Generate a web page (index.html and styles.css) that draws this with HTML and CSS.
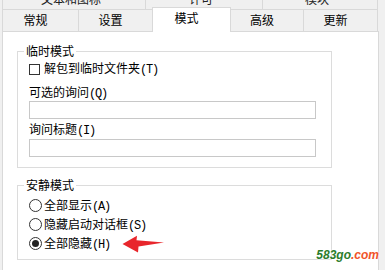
FILE: index.html
```html
<!DOCTYPE html>
<html lang="zh-CN">
<head>
  <meta charset="UTF-8">
  <title>自解压选项 - 模式</title>
  <link rel="stylesheet" href="styles.css">
</head>
<body>
  <div class="tabs tabs-back">
    <div class="tab tab-text"><span>文本和图标</span></div>
    <div class="tab tab-license"><span>许可</span></div>
    <div class="tab tab-module"><span>模块</span></div>
  </div>

  <div class="tabs tabs-front">
    <div class="tab tab-general">常规</div>
    <div class="tab tab-setup">设置</div>
    <div class="tab tab-modes active">模式</div>
    <div class="tab tab-advanced">高级</div>
    <div class="tab tab-update">更新</div>
  </div>

  <div class="panel">
    <div class="group group-temp">
      <div class="group-title">临时模式</div>
      <div class="option-row check-row">
        <span class="check"></span>
        <span class="label">解包到临时文件夹<span class="key">(T)</span></span>
      </div>
      <div class="field-label first">可选的询问<span class="key">(Q)</span></div>
      <div class="textbox"></div>
      <div class="field-label">询问标题<span class="key">(I)</span></div>
      <div class="textbox"></div>
    </div>

    <div class="group group-silent">
      <div class="group-title">安静模式</div>
      <div class="option-row radio-row first">
        <span class="radio"></span>
        <span class="label">全部显示<span class="key">(A)</span></span>
      </div>
      <div class="option-row radio-row">
        <span class="radio"></span>
        <span class="label">隐藏启动对话框<span class="key">(S)</span></span>
      </div>
      <div class="option-row radio-row">
        <span class="radio on"></span>
        <span class="label">全部隐藏<span class="key">(H)</span></span>
        <svg class="arrow" width="42" height="18" viewBox="0 0 42 18">
          <polygon points="0.5,9 15,0.8 14.5,5.2 42,7.6 16.5,11.5 16,17.5" fill="#e8262c"/>
        </svg>
      </div>
    </div>
  </div>

  <div class="watermark"><span class="wm-num">583go</span><span class="wm-dom">.com</span></div>
</body>
</html>
```

FILE: styles.css
```css
:root {
  --window-bg: #f0f0f0;
  --tab-border: #d9d9d9;
  --group-border: #dcdcdc;
  --box-border: #c8c8c8;
  --text: #000;
}

* {
  margin: 0;
  padding: 0;
  box-sizing: border-box;
}

body {
  width: 385px;
  height: 270px;
  overflow: hidden;
  position: relative;
  background: var(--window-bg);
  color: var(--text);
  font-family: "Noto Sans CJK SC", sans-serif;
  font-size: 12px;
}

.tabs {
  display: flex;
  align-items: flex-start;
  padding-left: 2px;
}

.tab {
  border: 1px solid var(--tab-border);
  border-bottom: none;
  margin-right: -1px;
  text-align: center;
  background: var(--window-bg);
}

/* back row, only its lower edge shows */
.tabs-back {
  height: 9px;
  overflow: hidden;
}

.tabs-back .tab {
  height: 9px;
  border-top: none;
  overflow: hidden;
  padding-right: 6px;
}

.tabs-back .tab span {
  display: block;
  line-height: 14px;
  margin-top: -8px;
  color: #222;
}

.tab-text { width: 144px; }
.tab-license { width: 118px; }
.tab-module { width: 116px; }

/* front row */
.tabs-front {
  height: 23px;
}

.tabs-front .tab {
  height: 22px;
  line-height: 20px;
  padding-right: 10px;
}

.tab-general { width: 77px; }
.tab-setup { width: 75px; }
.tab-modes { width: 79px; }
.tab-advanced { width: 74px; }
.tab-update { width: 75px; }

.tabs-front .tab.active {
  height: 25px;
  margin-top: -2px;
  background: #fff;
  position: relative;
  z-index: 1;
}

.panel {
  width: 377px;
  height: 250px;
  margin: -1px 0 0 2px;
  padding-top: 19px;
  background: #fff;
  border: 1px solid var(--tab-border);
}

.group {
  width: 315px;
  margin-left: 14px;
  border: 1px solid var(--group-border);
  padding: 0 15px 0 11px;
}

.group-title {
  width: fit-content;
  margin: -8px 0 0 -5px;
  padding: 0 2px;
  line-height: 14px;
  background: #fff;
}

.group-temp {
  padding-bottom: 10px;
}

.group-silent {
  margin-top: 17px;
  padding-bottom: 6px;
}

.option-row {
  display: flex;
  align-items: center;
}

.label {
  line-height: 14px;
}

.key {
  font-family: "Liberation Mono", monospace;
  letter-spacing: -1.2px;
}

.check-row {
  height: 18px;
  margin-top: 2px;
}

.check {
  width: 11px;
  height: 11px;
  border: 1px solid #333;
  margin-right: 4px;
}

.field-label {
  line-height: 14px;
  margin-top: 3px;
}

.field-label.first {
  margin-top: 7px;
}

.textbox {
  height: 18px;
  border: 1px solid var(--box-border);
}

.field-label + .textbox {
  margin-top: 0;
}

.group-temp .textbox:last-child {
  margin-top: 1px;
}

.radio-row {
  height: 19px;
}

.radio-row.first {
  margin-top: 4px;
}

.radio {
  width: 13px;
  height: 13px;
  border: 1px solid #333;
  border-radius: 50%;
  margin-right: 2px;
  display: flex;
  align-items: center;
  justify-content: center;
}

.radio.on::after {
  content: "";
  width: 7px;
  height: 7px;
  border-radius: 50%;
  background: #222;
}

.arrow {
  margin-left: 12px;
}

.watermark {
  position: absolute;
  right: 6px;
  bottom: 8px;
  font-family: "Liberation Sans", sans-serif;
  font-style: italic;
  font-weight: bold;
  font-size: 12px;
  line-height: 14px;
  text-shadow: 0 0 2px #fff, 0 0 2px #fff;
}

.wm-num {
  color: #2b7d2b;
}

.wm-dom {
  color: #f0542a;
}
```
